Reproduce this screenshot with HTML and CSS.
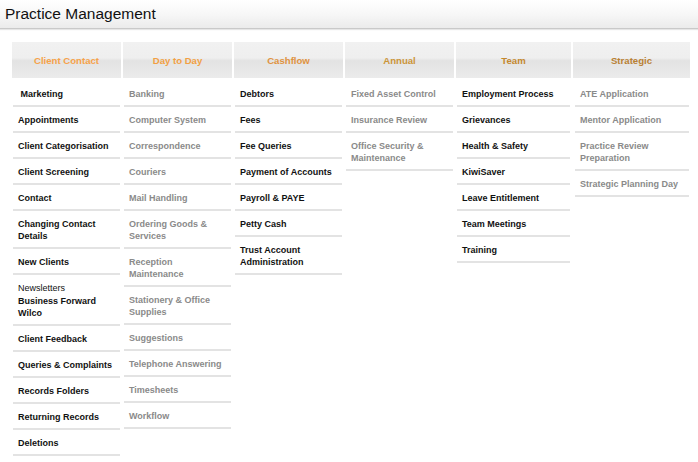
FILE: index.html
```html
<!DOCTYPE html>
<html lang="en">
<head>
  <meta charset="UTF-8">
  <title>Practice Management</title>
  <link rel="stylesheet" href="styles.css">
</head>
<body>

<div class="titlebar">
  <h1>Practice Management</h1>
</div>

<div class="board">

  <!-- Client Contact -->
  <div class="col col-client">
    <div class="col-head">Client Contact</div>
    <ul class="items">
      <li>&nbsp;Marketing</li>
      <li>Appointments</li>
      <li>Client Categorisation</li>
      <li>Client Screening</li>
      <li>Contact</li>
      <li>Changing Contact Details</li>
      <li>New Clients</li>
      <li><span class="sub">Newsletters</span>Business Forward Wilco</li>
      <li>Client Feedback</li>
      <li>Queries &amp; Complaints</li>
      <li>Records Folders</li>
      <li>Returning Records</li>
      <li>Deletions</li>
    </ul>
  </div>

  <!-- Day to Day -->
  <div class="col col-day muted">
    <div class="col-head">Day to Day</div>
    <ul class="items">
      <li>Banking</li>
      <li>Computer System</li>
      <li>Correspondence</li>
      <li>Couriers</li>
      <li>Mail Handling</li>
      <li>Ordering Goods &amp; Services</li>
      <li>Reception Maintenance</li>
      <li>Stationery &amp; Office Supplies</li>
      <li>Suggestions</li>
      <li>Telephone Answering</li>
      <li>Timesheets</li>
      <li>Workflow</li>
    </ul>
  </div>

  <!-- Cashflow -->
  <div class="col col-cash">
    <div class="col-head">Cashflow</div>
    <ul class="items">
      <li>Debtors</li>
      <li>Fees</li>
      <li>Fee Queries</li>
      <li>Payment of Accounts</li>
      <li>Payroll &amp; PAYE</li>
      <li>Petty Cash</li>
      <li>Trust Account Administration</li>
    </ul>
  </div>

  <!-- Annual -->
  <div class="col col-annual muted">
    <div class="col-head">Annual</div>
    <ul class="items">
      <li>Fixed Asset Control</li>
      <li>Insurance Review</li>
      <li>Office Security &amp; Maintenance</li>
    </ul>
  </div>

  <!-- Team -->
  <div class="col col-team">
    <div class="col-head">Team</div>
    <ul class="items">
      <li>Employment Process</li>
      <li>Grievances</li>
      <li>Health &amp; Safety</li>
      <li>KiwiSaver</li>
      <li>Leave Entitlement</li>
      <li>Team Meetings</li>
      <li>Training</li>
    </ul>
  </div>

  <!-- Strategic -->
  <div class="col col-strategic muted">
    <div class="col-head">Strategic</div>
    <ul class="items">
      <li>ATE Application</li>
      <li>Mentor Application</li>
      <li>Practice Review Preparation</li>
      <li>Strategic Planning Day</li>
    </ul>
  </div>

</div>

</body>
</html>
```

FILE: styles.css
```css
body { margin: 0; background: #fff; font-family: "Liberation Sans", Arial, sans-serif; color: #111; }

.titlebar {
  height: 28px;
  background: linear-gradient(#ffffff, #f7f7f7 50%, #ebebeb);
  border-bottom: 1px solid #c9c9c9;
  box-shadow: 0 1px 1px #e6e6e6;
}
.titlebar h1 { margin: 0; padding: 4px 0 0 5px; font-size: 15.5px; font-weight: normal; line-height: 20px; color: #111; }

.board { display: flex; gap: 2px; padding: 13px 0 0 12px; }
.col { width: 109px; flex: none; }
.col-team { width: 115px; }
.col-strategic { width: 117px; }

.col-head {
  height: 36px;
  line-height: 37px;
  text-align: center;
  font-size: 9.6px;
  font-weight: bold;
  background: linear-gradient(#f1f1f1 0, #efefef 44%, #e3e3e3 52%, #ebebeb 100%);
}
.col-client .col-head { color: #f6a24a; }
.col-day .col-head { color: #f2a043; }
.col-cash .col-head { color: #e09340; }
.col-annual .col-head { color: #cc9538; }
.col-team .col-head { color: #c4892f; }
.col-strategic .col-head { color: #b98033; }

.items { list-style: none; margin: 3px 0 0; padding: 0; }
.items li {
  margin: 0 1px;
  padding: 7px 5px 5px;
  font-size: 9px;
  font-weight: bold;
  line-height: 12px;
  border-bottom: 2px solid #e3e3e3;
}
.col-strategic .items li { margin: 0 1px 0 2px; }
.muted .items li { color: #8a8a8a; }
.items .sub { display: block; font-weight: normal; line-height: 13px; }
```
